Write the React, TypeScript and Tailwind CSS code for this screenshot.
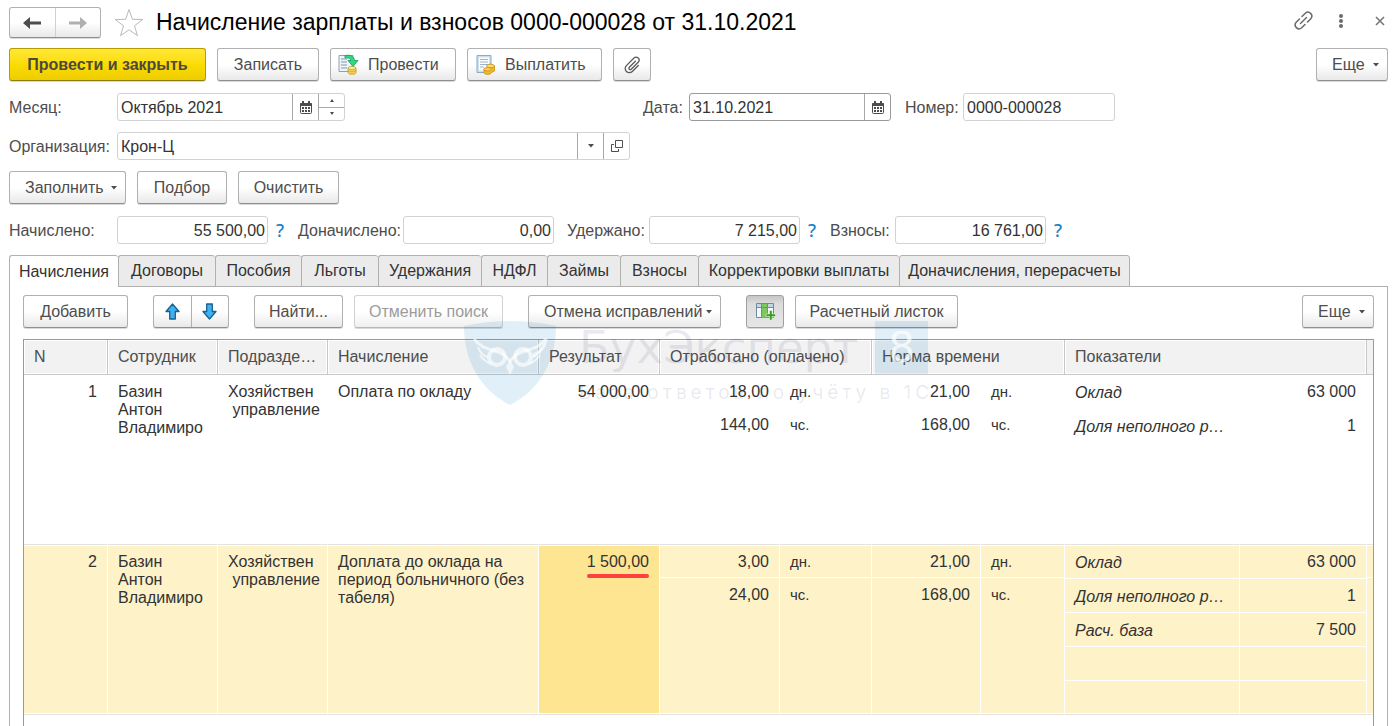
import { useState } from "react";
import type { ReactNode } from "react";
import clsx from "clsx";

interface ToolButtonProps {
  children: ReactNode;
  variant?: "normal" | "primary" | "pressed" | "disabled";
  icon?: ReactNode;
  menu?: boolean;
  label?: string;
  className?: string;
}

const variantStyles = {
  normal: "border-[#b0b0b0] border-b-[#8f8f8f] bg-linear-to-b from-white from-50% to-[#e9e9e9] text-[#4d4d4d]",
  primary: "border-[#b59c00] border-b-[#8f7c00] bg-linear-to-b from-[#ffe833] via-[#fbdc00] to-[#edcd00] font-bold text-[#4d4a3d]",
  pressed: "border-[#9f9f9f] bg-linear-to-b from-[#c6c6c6] via-[#dcdcdc] via-25% to-[#e6e6e6]",
  disabled: "border-[#d2d2d2] border-b-[#b8b8b8] bg-linear-to-b from-white from-50% to-[#f0f0f0] text-[#9b9b9b]",
};

function Caret() {
  return (
    <svg width="6" height="4" viewBox="0 0 6 4" fill="#4d4d4d" className="shrink-0" aria-hidden="true">
      <path d="M0 0h6L3 3.4z" />
    </svg>
  );
}

function ToolButton({ children, variant = "normal", icon, menu, label, className }: ToolButtonProps) {
  return (
    <button
      type="button"
      aria-label={label}
      disabled={variant === "disabled"}
      className={clsx(
        "flex h-[33px] shrink-0 items-center whitespace-nowrap rounded-[3px] border shadow-[0_1px_0_rgba(0,0,0,0.15)]",
        icon ? "gap-[9px] pl-[7px]" : menu ? "justify-between pl-[15px] pr-2" : "justify-center",
        variantStyles[variant],
        className
      )}
    >
      {icon}
      {children}
      {menu && <Caret />}
    </button>
  );
}

function ArrowIcon({ color, flip }: { color: string; flip?: boolean }) {
  return (
    <svg width="18" height="14" viewBox="0 0 18 14" aria-hidden="true">
      <path
        d={flip ? "M0 5.5h11V1l7 6-7 6V8.5H0z" : "M18 5.5H7V1L0 7l7 6V8.5h11z"}
        fill={color}
      />
    </svg>
  );
}

function BlueArrow({ down }: { down?: boolean }) {
  return (
    <svg width="15" height="17" viewBox="0 0 15 17" aria-hidden="true">
      <path
        d={down ? "M4.7 1h5.6v7.5H14L7.5 16 1 8.5h3.7z" : "M4.7 16h5.6V8.5H14L7.5 1 1 8.5h3.7z"}
        fill="#3fb1f0"
        stroke="#17608f"
        strokeWidth="1.3"
        strokeLinejoin="round"
      />
    </svg>
  );
}

function CalendarIcon() {
  return (
    <svg width="12" height="13" viewBox="0 0 12 13" aria-hidden="true">
      <rect x="0.5" y="2.5" width="11" height="10" rx="1" fill="#fff" stroke="#4d4d4d" />
      <path d="M0 3a1 1 0 0 1 1-1h10a1 1 0 0 1 1 1v2H0z" fill="#4d4d4d" />
      <path d="M2 0h2v3H2zM8 0h2v3H8z" fill="#4d4d4d" />
      <path d="M2 6h2v2H2zM5 6h2v2H5zM8 6h2v2H8zM2 9h2v2H2zM5 9h2v2H5zM8 9h2v2H8z" fill="#4d4d4d" />
    </svg>
  );
}

function OpenIcon() {
  return (
    <svg width="12" height="12" viewBox="0 0 12 12" fill="none" stroke="#4d4d4d" aria-hidden="true">
      <path d="M4.500 0.500h7v7h-7z" />
      <path d="M3 4.500H0.500v7h7V9" />
    </svg>
  );
}

function PostIcon() {
  return (
    <svg width="21" height="21" viewBox="0 0 21 21" className="shrink-0" aria-hidden="true">
      <path d="M1 1.5h14v16H1z" fill="#eef4f8" stroke="#8aa0b3" />
      <path d="M3 5h6M3 8h6M3 11h6M3 14h6" stroke="#7f99ad" />
      <path d="M7 1.500c6-1 9 1 9.500 5H20l-5 6-5-6h3c-.5-2-2-3-6-2.500z" fill="#2fd98a" stroke="#129a52" strokeWidth="0.8" />
      <path d="M10 14v4.500c0 2.500 8 2.500 8 0V14z" fill="#f3d35c" stroke="#c0a02a" strokeWidth="0.8" />
      <ellipse cx="14" cy="14" rx="4" ry="1.500" fill="#fdf0a8" stroke="#c0a02a" strokeWidth="0.8" />
      <path d="M10 16.300c0 2 8 2 8 0" fill="none" stroke="#c0a02a" strokeWidth="0.8" />
    </svg>
  );
}

function PayIcon() {
  return (
    <svg width="21" height="21" viewBox="0 0 21 21" className="shrink-0" aria-hidden="true">
      <path d="M2 1.500h14v17H2z" fill="#c9dff2" stroke="#8fabc4" />
      <path d="M4 3.500h10v13H4z" fill="#fff" />
      <path d="M5 5.500h8M5 8h8M5 10.500h8M5 13h4" stroke="#9ab3c8" />
      <path d="M9 15v3.500c0 2.500 7 2.500 7.500 0l3-1.500v-5z" fill="#f0b92d" stroke="#c98b16" strokeWidth="0.8" />
      <ellipse cx="15.500" cy="12" rx="4" ry="1.800" fill="#fbdc6b" stroke="#c98b16" strokeWidth="0.8" />
      <ellipse cx="12.500" cy="15.300" rx="3.800" ry="1.700" fill="#fbd45a" stroke="#c98b16" strokeWidth="0.8" />
    </svg>
  );
}

function ClipIcon() {
  return (
    <svg width="18" height="18" viewBox="0 0 18 18" fill="none" stroke="#5a5a5a" strokeWidth="1.3" strokeLinecap="round" className="shrink-0" aria-hidden="true">
      <path d="M12.400 5.200 6.300 11.300a1.300 1.300 0 0 0 1.900 1.900l7-7a2.900 2.900 0 0 0-4.200-4.200L3.400 9.600a4.100 4.100 0 0 0 5.900 5.900l6-6" />
    </svg>
  );
}

function ColumnsIcon() {
  return (
    <svg width="21" height="19" viewBox="0 0 21 19" className="shrink-0" aria-hidden="true">
      <path d="M1.500 1.500h17v14h-17z" fill="#f5f8fa" stroke="#6f8ba3" />
      <path d="M2 2h16v3H2z" fill="#c5d5e2" />
      <path d="M7 2h5.500v13.500H7z" fill="#7cc75f" />
      <path d="M6.500 1.500v14M12.500 1.500v14M1.500 5.500h17" stroke="#6f8ba3" />
      <path d="M14.500 8.500h2.600v3.400h3.400v2.600h-3.400V18h-2.600v-3.500h-3.400v-2.600h3.400z" fill="#32a31c" stroke="#fff" strokeWidth="0.5" />
    </svg>
  );
}

function LinkIcon() {
  return (
    <svg width="21" height="21" viewBox="0 0 21 21" fill="none" stroke="#6a6a6a" strokeWidth="1.500" strokeLinecap="round" aria-hidden="true">
      <path d="M7.500 13.500l6-6" />
      <path d="M9 6.500l3.300-3.300a3.900 3.900 0 0 1 5.500 5.500L14.500 12" />
      <path d="M6.500 9l-3.300 3.300a3.900 3.900 0 0 0 5.500 5.500L12 14.500" />
    </svg>
  );
}

const cellButton = "flex w-[26px] items-center justify-center border-l border-[#a8a8a8]";

interface FieldProps {
  id: string;
  label: string;
  value: string;
  width: string;
  labelWidth: string;
  right?: boolean;
  active?: boolean;
  children?: ReactNode;
}

function Field({ id, label, value, width, labelWidth, right, active, children }: FieldProps) {
  return (
    <div className="flex items-center">
      <label htmlFor={id} className={clsx("shrink-0 pt-[2px] whitespace-nowrap text-[#4d4d4d]", labelWidth)}>
        {label}
      </label>
      <div className={clsx("flex h-7 rounded-[3px] border bg-white", active ? "border-[#9a9a9a]" : "border-[#d2d2d2]", width)}>
        <input
          id={id}
          defaultValue={value}
          className={clsx("min-w-0 flex-1 bg-transparent pt-[2px] text-[#333] outline-none", right ? "px-[2px] text-right" : "px-[3px]")}
        />
        {children}
      </div>
    </div>
  );
}

function Total({ id, label, value, labelWidth, hint }: { id: string; label: string; value: string; labelWidth: string; hint?: boolean }) {
  return (
    <div className="flex items-center">
      <Field id={id} label={label} value={value} width="w-[151px]" labelWidth={labelWidth} right />
      {hint && (
        <button type="button" aria-label={"Подробнее: " + label} className="ml-[7px] w-[10px] font-['Noto_Sans',sans-serif] text-lg leading-7 font-medium text-[#1a7fc6]">
          ?
        </button>
      )}
    </div>
  );
}

const tabs = [
  { name: "Начисления", width: "w-[109px]" },
  { name: "Договоры", width: "w-[97px]" },
  { name: "Пособия", width: "w-[86px]" },
  { name: "Льготы", width: "w-[77px]" },
  { name: "Удержания", width: "w-[103px]" },
  { name: "НДФЛ", width: "w-[66px]" },
  { name: "Займы", width: "w-[73px]" },
  { name: "Взносы", width: "w-[78px]" },
  { name: "Корректировки выплаты", width: "w-[201px]" },
  { name: "Доначисления, перерасчеты", width: "w-[231px]" },
];

const rows = [
  {
    n: 1,
    accrual: "Оплата по окладу",
    result: "54 000,00",
    worked: ["18,00", "144,00"],
    norm: ["21,00", "168,00"],
    indicators: [["Оклад", "63 000"], ["Доля неполного р…", "1"], ["", ""], ["", ""], ["", ""]],
  },
  {
    n: 2,
    accrual: "Доплата до оклада на период больничного (без табеля)",
    result: "1 500,00",
    worked: ["3,00", "24,00"],
    norm: ["21,00", "168,00"],
    indicators: [["Оклад", "63 000"], ["Доля неполного р…", "1"], ["Расч. база", "7 500"], ["", ""], ["", ""]],
  },
];

// two stacked values: days above, hours below
function Pair({ items, right, small }: { items: string[]; right?: boolean; small?: boolean }) {
  return (
    <div className={clsx("flex flex-col", right && "text-right", small && "text-[15px]")}>
      <div className="h-[33px] border-b border-white px-[10px] pt-2">{items[0]}</div>
      <div className="px-[10px] pt-2">{items[1]}</div>
    </div>
  );
}

function Stack({ items, right }: { items: string[]; right?: boolean }) {
  return (
    <div className={clsx("flex flex-col", right ? "text-right" : "italic")}>
      {items.map((item, i) => (
        <div
          key={i}
          className={clsx("h-[34px] truncate border-b border-white px-[10px] last:h-[33px] last:border-b-0", right ? "pt-2" : "pt-[9px]")}
        >
          {item}
        </div>
      ))}
    </div>
  );
}

function Watermark() {
  return (
    <div aria-hidden="true" className="pointer-events-none absolute left-[440px] -top-[19px] flex items-start whitespace-nowrap">
      <svg width="93" height="84" viewBox="0 0 93 84">
        <path d="M0 5Q46-5 92 5C92 42 74 70 46 84 18 70 0 42 0 5z" fill="#0a84c8" fillOpacity="0.12" />
        <g fill="none" stroke="#fff" strokeOpacity="0.65">
          <path d="M10 18c8 11 20 10 30 16l6 6 6-6c10-6 22-5 30-16-1 8-6 14-13 16" strokeWidth="3" />
          <circle cx="33" cy="36" r="8" strokeWidth="4" />
          <circle cx="59" cy="36" r="8" strokeWidth="4" />
          <path d="M14 26c2 6 5 9 10 10M16 34c3 5 6 7 11 9M78 26c-2 6-5 9-10 10M76 34c-3 5-6 7-11 9" strokeWidth="2" />
        </g>
        <path d="M46 38l4 8-4 8-4-8z" fill="#fff" fillOpacity="0.65" />
      </svg>
      <div className="ml-[22px] text-[#1e1e5a]/10">
        <div className="flex items-start gap-[18px]">
          <span className="w-[278px] font-['DejaVu_Sans',sans-serif] text-[45px] leading-[53px]">БухЭксперт</span>
          <span className="flex size-[53px] items-center justify-center bg-[#0a84c8]/12 font-['DejaVu_Sans',sans-serif] text-[42px] text-white/70">8</span>
        </div>
        <div className="mt-[7px] font-[Inter,sans-serif] text-[19px] leading-6 tracking-[4px]">База ответов по учёту в 1С</div>
      </div>
    </div>
  );
}

const headCell = "border-r border-b border-[#c8c8c8] px-[10px] text-left font-normal shadow-[inset_0_0_0_1px_#fff]";

function AccrualsTable() {
  return (
    <table className="w-full table-fixed border-separate border-spacing-0 leading-[18px] text-[#333]">
      <colgroup>
        <col className="w-[84px]" />
        <col className="w-[110px]" />
        <col className="w-[110px]" />
        <col className="w-[211px]" />
        <col className="w-[121px]" />
        <col className="w-[120px]" />
        <col className="w-[92px]" />
        <col className="w-[109px]" />
        <col className="w-[84px]" />
        <col />
        <col className="w-[127px]" />
        <col className="w-[6px]" />
      </colgroup>
      <thead>
        <tr className="h-[35px] bg-[#f2f2f2] text-[#4d4d4d]">
          <th className={headCell}>N</th>
          <th className={headCell}>Сотрудник</th>
          <th className={headCell}>Подразде…</th>
          <th className={headCell}>Начисление</th>
          <th className={headCell}>Результат</th>
          <th className={headCell} colSpan={2}>Отработано (оплачено)</th>
          <th className={headCell} colSpan={2}>Норма времени</th>
          <th className={headCell} colSpan={2}>Показатели</th>
          <th className="border-b border-[#c8c8c8] p-0" />
        </tr>
      </thead>
      <tbody>
        {rows.map((row) => {
          const selected = row.n === 2;
          const cell = "border-r border-b border-r-white border-b-[#e2e2e2] p-0 align-top shadow-[inset_0_1px_0_#fff,inset_0_-1px_0_#fff]";
          const padded = "border-r border-b border-r-white border-b-[#e2e2e2] px-[10px] pt-2 align-top shadow-[inset_0_1px_0_#fff,inset_0_-1px_0_#fff]";
          return (
            <tr key={row.n} className={clsx("h-[170px]", selected && "bg-[#fdf2c8]")}>
              <td className={clsx(padded, "text-right")}>{row.n}</td>
              <td className={padded}>Базин<br />Антон<br />Владимиро</td>
              <td className={clsx(padded, "whitespace-pre")}>{"Хозяйствен\n управление"}</td>
              <td className={padded}>{row.accrual}</td>
              <td className={clsx(padded, "text-right", selected && "bg-[#fee591]")}>
                {selected ? (
                  <span className="inline-block">
                    {row.result}
                    <span className="mt-[3px] block h-1 rounded-full bg-[#ff4040]" />
                  </span>
                ) : (
                  row.result
                )}
              </td>
              <td className={cell}><Pair items={row.worked} right /></td>
              <td className={cell}><Pair items={["дн.", "чс."]} small /></td>
              <td className={cell}><Pair items={row.norm} right /></td>
              <td className={cell}><Pair items={["дн.", "чс."]} small /></td>
              <td className={cell}><Stack items={row.indicators.map((x) => x[0])} /></td>
              <td className={cell}><Stack items={row.indicators.map((x) => x[1])} right /></td>
              <td className={clsx(cell, "border-r-0")}><div className="h-[33px] border-b border-white" /></td>
            </tr>
          );
        })}
      </tbody>
    </table>
  );
}

export default function App() {
  const [tab, setTab] = useState(0);

  return (
    <div className="flex min-h-screen flex-col bg-white pt-[7px] pr-[5px] pl-[9px] font-['Liberation_Sans',Arial,sans-serif] text-base leading-5">
      <header className="flex h-[31px] items-center">
        <div className="flex h-[31px] w-[92px] rounded-[3px] border border-[#b0b0b0] border-b-[#8f8f8f] bg-linear-to-b from-white from-50% to-[#e9e9e9] shadow-[0_1px_0_rgba(0,0,0,0.15)]">
          <button type="button" aria-label="Назад" className="flex flex-1 items-center justify-center">
            <ArrowIcon color="#4d4d4d" />
          </button>
          <button type="button" aria-label="Вперед" className="flex flex-1 items-center justify-center border-l border-[#d0d0d0]">
            <ArrowIcon color="#b0b0b0" flip />
          </button>
        </div>
        <button type="button" aria-label="В избранное" className="ml-[13px]">
          <svg width="30" height="29" viewBox="0 0 30 29" fill="#fff" stroke="#b4bac0" aria-hidden="true">
            <path d="M15 1.500l3.400 9.800 10.400.2-8.300 6.300 3 9.900L15 21.800l-8.500 5.900 3-9.900-8.300-6.300 10.400-.2z" />
          </svg>
        </button>
        <h1 className="ml-3 pb-[2px] text-[23px] leading-7 text-black">Начисление зарплаты и взносов 0000-000028 от 31.10.2021</h1>
        <div className="ml-auto flex items-center pr-[3px] pb-1">
          <button type="button" aria-label="Получить ссылку"><LinkIcon /></button>
          <button type="button" aria-label="Меню" className="ml-6">
            <svg width="6" height="16" viewBox="0 0 6 16" fill="#6a6a6a" aria-hidden="true">
              <circle cx="3" cy="3" r="2" /><circle cx="3" cy="8" r="2" /><circle cx="3" cy="13" r="2" />
            </svg>
          </button>
          <button type="button" aria-label="Закрыть" className="ml-[31px]">
            <svg width="10" height="10" viewBox="0 0 10 10" stroke="#777" strokeWidth="1.600" aria-hidden="true">
              <path d="M1 1l8 8M9 1L1 9" />
            </svg>
          </button>
        </div>
      </header>

      <div className="mt-[10px] flex gap-[11px]">
        <ToolButton variant="primary" className="w-[197px]">Провести и закрыть</ToolButton>
        <ToolButton className="w-[102px]">Записать</ToolButton>
        <ToolButton icon={<PostIcon />} className="w-[126px]">Провести</ToolButton>
        <ToolButton icon={<PayIcon />} className="w-[135px]">Выплатить</ToolButton>
        <ToolButton label="Файлы" className="w-[38px]"><ClipIcon /></ToolButton>
        <ToolButton menu className="ml-auto w-[72px]">Еще</ToolButton>
      </div>

      <div className="mt-3 flex">
        <Field id="month" label="Месяц:" value="Октябрь 2021" width="w-[228px]" labelWidth="w-[108px]">
          <button type="button" aria-label="Выбрать месяц" className={cellButton}><CalendarIcon /></button>
          <div className="flex w-[26px] flex-col border-l border-[#a8a8a8]">
            <button type="button" aria-label="Следующий месяц" className="flex flex-1 items-center justify-center border-b border-[#a8a8a8]">
              <svg width="4" height="3" viewBox="0 0 4 3" fill="#4d4d4d" aria-hidden="true"><path d="M0 3h4L2 0z" /></svg>
            </button>
            <button type="button" aria-label="Предыдущий месяц" className="flex flex-1 items-center justify-center">
              <svg width="4" height="3" viewBox="0 0 4 3" fill="#4d4d4d" aria-hidden="true"><path d="M0 0h4L2 3z" /></svg>
            </button>
          </div>
        </Field>
        <div className="ml-[298px] flex gap-[14px]">
          <Field id="date" label="Дата:" value="31.10.2021" width="w-[202px]" labelWidth="w-[46px]" active>
            <button type="button" aria-label="Выбрать дату" className={cellButton}><CalendarIcon /></button>
          </Field>
          <Field id="number" label="Номер:" value="0000-000028" width="w-[152px]" labelWidth="w-[58px]" />
        </div>
      </div>

      <div className="mt-[11px] flex">
        <Field id="org" label="Организация:" value="Крон-Ц" width="w-[513px]" labelWidth="w-[108px]">
          <button type="button" aria-label="Выбрать организацию" className={cellButton}><Caret /></button>
          <button type="button" aria-label="Открыть организацию" className={cellButton}><OpenIcon /></button>
        </Field>
      </div>

      <div className="mt-[11px] flex gap-[11px]">
        <ToolButton menu className="w-[117px]">Заполнить</ToolButton>
        <ToolButton className="w-[90px]">Подбор</ToolButton>
        <ToolButton className="w-[101px]">Очистить</ToolButton>
      </div>

      <div className="mt-3 flex gap-[13px]">
        <Total id="accrued" label="Начислено:" value="55 500,00" labelWidth="w-[108px]" hint />
        <Total id="extra" label="Доначислено:" value="0,00" labelWidth="w-[105px]" />
        <Total id="withheld" label="Удержано:" value="7 215,00" labelWidth="w-[82px]" hint />
        <Total id="contrib" label="Взносы:" value="16 761,00" labelWidth="w-[65px]" hint />
      </div>

      <div role="tablist" className="relative mt-[11px] flex">
        {tabs.map(({ name, width }, i) => (
          <button
            key={name}
            type="button"
            role="tab"
            aria-selected={i === tab}
            onClick={() => setTab(i)}
            className={clsx(
              "-mb-px h-8 rounded-t-[3px] border-t border-l border-[#b0b0b0] text-center whitespace-nowrap text-[#333] last:border-r",
              width,
              i === tab ? "bg-white" : "border-b bg-[#ebebeb]"
            )}
          >
            {name}
          </button>
        ))}
      </div>

      <main className="flex flex-1 flex-col border border-b-0 border-[#b0b0b0] px-[13px] pt-2">
        <div className="flex">
          <ToolButton className="w-[105px]">Добавить</ToolButton>
          <div className="ml-[25px] flex h-[33px] w-[76px] rounded-[3px] border border-[#b0b0b0] border-b-[#8f8f8f] bg-linear-to-b from-white from-50% to-[#e9e9e9] shadow-[0_1px_0_rgba(0,0,0,0.15)]">
            <button type="button" aria-label="Переместить вверх" className="flex flex-1 items-center justify-center"><BlueArrow /></button>
            <button type="button" aria-label="Переместить вниз" className="flex flex-1 items-center justify-center border-l border-[#b0b0b0]"><BlueArrow down /></button>
          </div>
          <div className="ml-[25px] flex gap-[11px]">
            <ToolButton className="w-[89px]">Найти...</ToolButton>
            <ToolButton variant="disabled" className="w-[149px]">Отменить поиск</ToolButton>
          </div>
          <ToolButton menu className="ml-[25px] w-[193px]">Отмена исправлений</ToolButton>
          <div className="ml-[25px] flex gap-[11px]">
            <ToolButton variant="pressed" label="Настройка колонок" className="w-[38px]"><ColumnsIcon /></ToolButton>
            <ToolButton className="w-[163px]">Расчетный листок</ToolButton>
          </div>
          <ToolButton menu className="ml-auto w-[72px]">Еще</ToolButton>
        </div>
        <div className="relative mt-[11px] flex-1 border border-b-0 border-[#9a9a9a]">
          <AccrualsTable />
          <Watermark />
        </div>
      </main>
    </div>
  );
}
